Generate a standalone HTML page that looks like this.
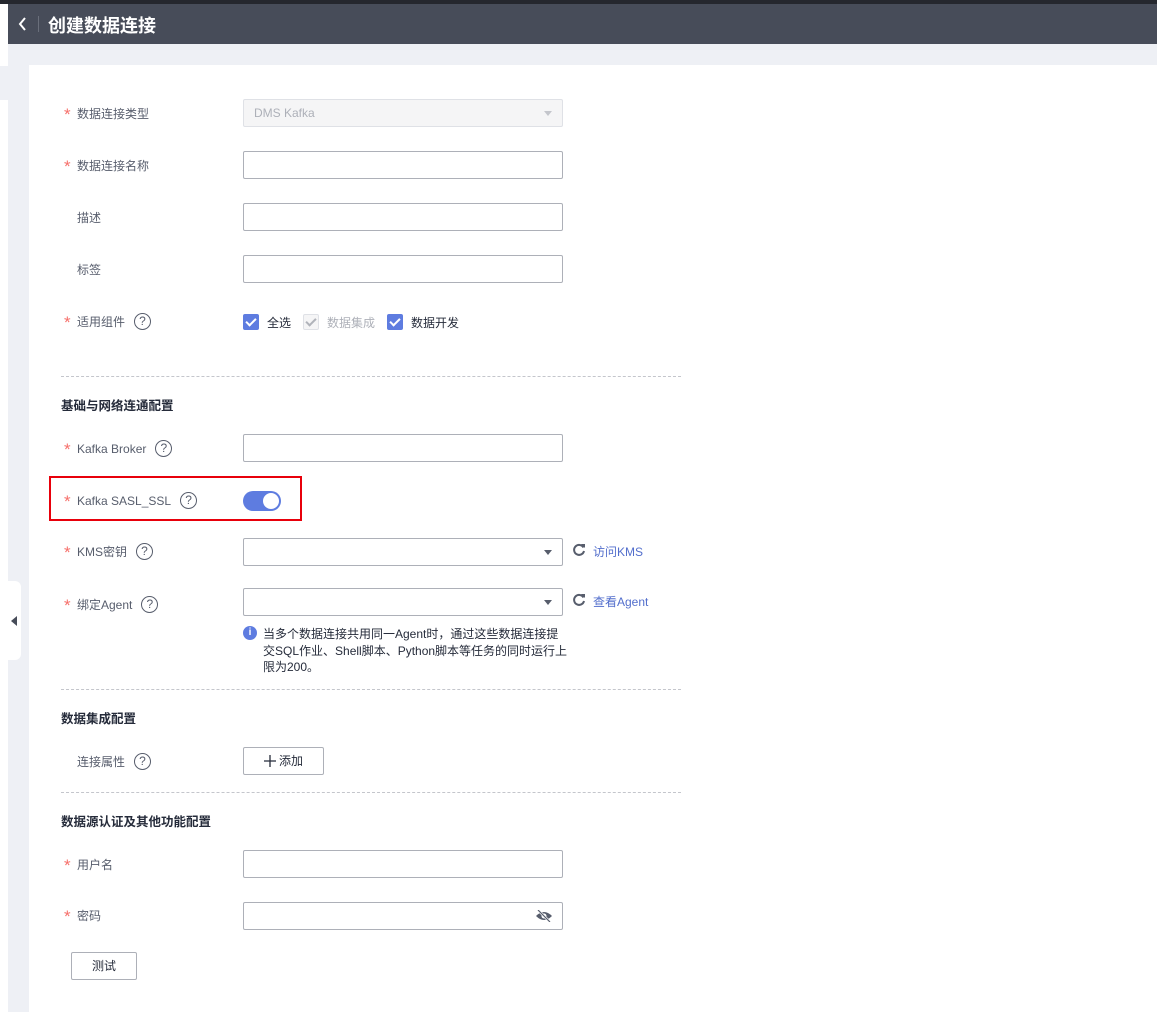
<!DOCTYPE html>
<html><head><meta charset="utf-8"><style>
*{margin:0;padding:0;box-sizing:border-box}
body{width:1157px;height:1012px;position:relative;overflow:hidden;background:#eef0f5;font-family:"Liberation Sans","Noto Sans CJK SC",sans-serif;font-size:12px;color:#575d6c}
.a{position:absolute}
.top{left:0;top:0;width:1157px;height:4px;background:#25272e}
.hd{left:8px;top:4px;width:1149px;height:40px;background:#474c59}
.lside{left:0;top:4px;width:8px;height:1008px;background:#fff}
.card{left:29px;top:65px;width:1128px;height:947px;background:#fff}
.lbl{position:absolute;left:64px;height:16px;line-height:16px;white-space:nowrap}
.lbl .s{color:#f66f6a;font-size:17px;display:inline-block;width:13px;vertical-align:-2px}
.lbl .n{display:inline-block;width:13px}
.q{display:inline-block;width:17px;height:17px;border:1.3px solid #575d6c;border-radius:50%;text-align:center;line-height:14px;font-size:12px;vertical-align:middle;margin-left:9px;margin-top:-2px}
.in{position:absolute;left:243px;width:320px;height:28px;border:1px solid #adb0b8;border-radius:2px;background:#fff}
.arr{position:absolute;right:10px;top:11px;border-left:4px solid transparent;border-right:4px solid transparent;border-top:5px solid #575d6c}
.dash{position:absolute;left:61px;width:620px;border-top:1px dashed #c4c6cc}
.sec{position:absolute;left:61px;font-weight:bold;color:#252b3a;font-size:12.5px}
.cb{position:absolute;width:16px;height:16px;border-radius:2px;background:#5e7ce0}
.cb:after{content:"";position:absolute;left:5px;top:2px;width:4px;height:8px;border:solid #fff;border-width:0 2px 2px 0;transform:rotate(45deg)}
.cb.d{background:#f5f5f6;border:1px solid #dfe1e6}
.cb.d:after{border-color:#b0b3ba;left:4px;top:1px}
.link{color:#526ecc}
</style></head><body>
<div class="a top"></div>
<div class="a lside"></div>
<div class="a" style="left:0;top:66px;width:8px;height:34px;background:#eef0f5"></div>
<div class="a hd">
 <svg class="a" style="left:9px;top:12px" width="12" height="16"><path d="M8 2L3 8l5 6" stroke="#fff" stroke-width="2" fill="none"/></svg>
 <div class="a" style="left:30px;top:12px;width:1px;height:16px;background:#6a6f7b"></div>
 <div class="a" style="left:40px;top:8px;color:#fff;font-size:18px;font-weight:bold">创建数据连接</div>
</div>
<div class="a" style="left:8px;top:581px;width:13px;height:79px;background:#fff;border-radius:0 6px 6px 0"></div>
<div class="a" style="left:11px;top:616px;border-top:5px solid transparent;border-bottom:5px solid transparent;border-right:6px solid #474c59"></div>
<div class="a card"></div>

<div class="lbl" style="top:106px"><span class="s">*</span>数据连接类型</div>
<div class="in" style="top:99px;background:#f5f5f6;border-color:#dfe1e6;color:#adb0b8;padding:6px 10px">DMS Kafka<div class="arr" style="border-top-color:#c4c6cc"></div></div>
<div class="lbl" style="top:158px"><span class="s">*</span>数据连接名称</div>
<div class="in" style="top:151px"></div>
<div class="lbl" style="top:210px"><span class="n"></span>描述</div>
<div class="in" style="top:203px"></div>
<div class="lbl" style="top:262px"><span class="n"></span>标签</div>
<div class="in" style="top:255px"></div>
<div class="lbl" style="top:314px"><span class="s">*</span>适用组件<span class="q">?</span></div>
<div class="cb" style="left:243px;top:314px"></div>
<div class="a" style="left:267px;top:314px;color:#252b3a">全选</div>
<div class="cb d" style="left:303px;top:314px"></div>
<div class="a" style="left:327px;top:314px;color:#adb0b8">数据集成</div>
<div class="cb" style="left:387px;top:314px"></div>
<div class="a" style="left:411px;top:314px;color:#252b3a">数据开发</div>

<div class="dash" style="top:376px"></div>
<div class="sec" style="top:395px">基础与网络连通配置</div>
<div class="lbl" style="top:441px"><span class="s">*</span>Kafka Broker<span class="q">?</span></div>
<div class="in" style="top:434px"></div>
<div class="a" style="left:49px;top:476px;width:253px;height:45px;border:2px solid #e8000b"></div>
<div class="lbl" style="top:493px"><span class="s">*</span>Kafka SASL_SSL<span class="q">?</span></div>
<div class="a" style="left:243px;top:491px;width:38px;height:20px;border-radius:10px;background:#5e7ce0"><div class="a" style="left:20px;top:2px;width:16px;height:16px;border-radius:50%;background:#fff"></div></div>
<div class="lbl" style="top:544px"><span class="s">*</span>KMS密钥<span class="q">?</span></div>
<div class="in" style="top:538px"><div class="arr"></div></div>
<svg class="a" style="left:572px;top:543px" width="14" height="14"><path d="M11.5 4.5A5 5 0 1 0 12 8" stroke="#575d6c" stroke-width="2" fill="none"/><path d="M9 1l4 0 0 4z" fill="#575d6c"/></svg>
<div class="a link" style="left:593px;top:543px">访问KMS</div>
<div class="lbl" style="top:597px"><span class="s">*</span>绑定Agent<span class="q">?</span></div>
<div class="in" style="top:588px"><div class="arr"></div></div>
<svg class="a" style="left:572px;top:593px" width="14" height="14"><path d="M11.5 4.5A5 5 0 1 0 12 8" stroke="#575d6c" stroke-width="2" fill="none"/><path d="M9 1l4 0 0 4z" fill="#575d6c"/></svg>
<div class="a link" style="left:593px;top:593px">查看Agent</div>
<div class="a" style="left:243px;top:626px;width:14px;height:14px;border-radius:50%;background:#5e7ce0;color:#fff;font-size:10px;font-weight:bold;text-align:center;line-height:14px">i</div>
<div class="a" style="left:263px;top:626px;width:340px;line-height:16.5px;color:#252b3a;white-space:nowrap">当多个数据连接共用同一Agent时，通过这些数据连接提<br>交SQL作业、Shell脚本、Python脚本等任务的同时运行上<br>限为200。</div>

<div class="dash" style="top:689px"></div>
<div class="sec" style="top:708px">数据集成配置</div>
<div class="lbl" style="top:754px"><span class="n"></span>连接属性<span class="q">?</span></div>
<div class="a" style="left:243px;top:747px;width:81px;height:28px;border:1px solid #adb0b8;border-radius:2px;color:#252b3a;line-height:26px">
<svg class="a" style="left:20px;top:7px" width="12" height="12"><path d="M6 0v12M0 6h12" stroke="#252b3a" stroke-width="1.3"/></svg>
<span class="a" style="left:35px;top:0">添加</span></div>

<div class="dash" style="top:792px"></div>
<div class="sec" style="top:811px">数据源认证及其他功能配置</div>
<div class="lbl" style="top:857px"><span class="s">*</span>用户名</div>
<div class="in" style="top:850px"></div>
<div class="lbl" style="top:908px"><span class="s">*</span>密码</div>
<div class="in" style="top:902px"><svg class="a" style="left:291px;top:7px" width="18" height="12"><path d="M1 6Q9 -2 17 6Q9 14 1 6z" fill="#575d6c"/><circle cx="9" cy="6" r="2.5" fill="#fff"/><path d="M3 0L15 12" stroke="#fff" stroke-width="2.5"/><path d="M3 0L15 12" stroke="#575d6c" stroke-width="1.2"/></svg></div>
<div class="a" style="left:71px;top:952px;width:66px;height:28px;border:1px solid #adb0b8;border-radius:2px;color:#252b3a;text-align:center;line-height:26px">测试</div>
</body></html>
